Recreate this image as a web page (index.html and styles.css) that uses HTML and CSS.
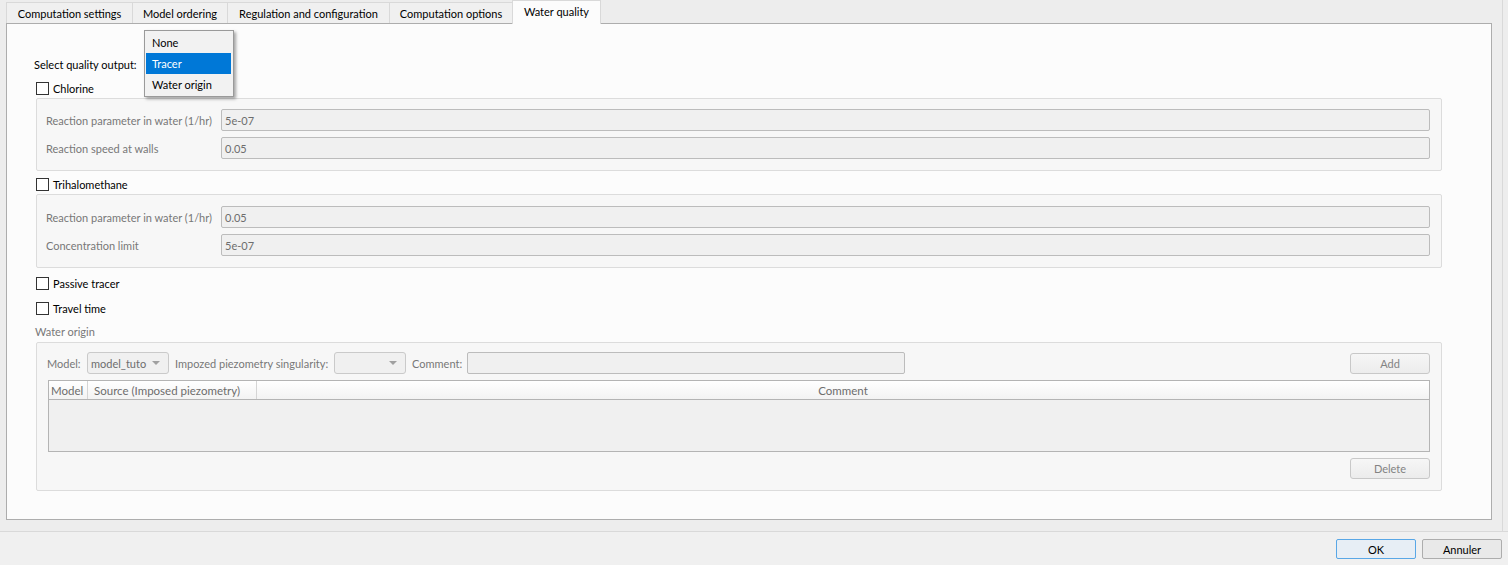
FILE: index.html
```html
<!DOCTYPE html>
<html>
<head>
<meta charset="utf-8">
<link rel="stylesheet" href="styles.css">
</head>
<body>
<div class="window">
  <div class="top">
    <div class="main">
      <div class="tabbar">
        <div class="tab t1">Computation settings</div>
        <div class="tab t2">Model ordering</div>
        <div class="tab t3">Regulation and configuration</div>
        <div class="tab t4">Computation options</div>
        <div class="tab t5 active">Water quality</div>
      </div>
      <div class="pane">
        <div class="row select-row">
          <span class="lbl">Select quality output:</span>
          <div class="combo qcombo"></div>
        </div>
        <div class="check c-chlorine"><span class="box"></span><span>Chlorine</span></div>
        <div class="group g1">
          <div class="frow"><span class="flabel">Reaction parameter in water (1/hr)</span><div class="input">5e-07</div></div>
          <div class="frow"><span class="flabel">Reaction speed at walls</span><div class="input">0.05</div></div>
        </div>
        <div class="check c-tri"><span class="box"></span><span>Trihalomethane</span></div>
        <div class="group g2">
          <div class="frow"><span class="flabel">Reaction parameter in water (1/hr)</span><div class="input">0.05</div></div>
          <div class="frow"><span class="flabel">Concentration limit</span><div class="input">5e-07</div></div>
        </div>
        <div class="check c-passive"><span class="box"></span><span>Passive tracer</span></div>
        <div class="check c-travel"><span class="box"></span><span>Travel time</span></div>
        <div class="section-label">Water origin</div>
        <div class="group g3">
          <div class="orow">
            <span class="dlabel l-model">Model:</span>
            <div class="combo mcombo"><span class="ctext">model_tuto</span><span class="arrow"></span></div>
            <span class="dlabel l-sing">Impozed piezometry singularity:</span>
            <div class="combo scombo"><span class="ctext"></span><span class="arrow"></span></div>
            <span class="dlabel l-comm">Comment:</span>
            <div class="input cinput"></div>
            <div class="spacer"></div>
            <div class="btn dis">Add</div>
          </div>
          <div class="table">
            <div class="thead">
              <div class="th th-model">Model</div>
              <div class="th th-source">Source (Imposed piezometry)</div>
              <div class="th th-comment">Comment</div>
            </div>
            <div class="tbody"></div>
          </div>
          <div class="brow"><div class="btn dis">Delete</div></div>
        </div>
        <div class="popup">
          <div class="item">None</div>
          <div class="item sel">Tracer</div>
          <div class="item">Water origin</div>
        </div>
      </div>
    </div>
    <div class="vline"></div>
  </div>
  <div class="bottom">
    <div class="btn ok">OK</div>
    <div class="btn">Annuler</div>
  </div>
</div>
</body>
</html>
```
FILE: styles.css
```css
* { box-sizing: border-box; }
html, body { margin: 0; padding: 0; }
body {
  width: 1508px;
  height: 565px;
  overflow: hidden;
  background: #ededed;
  font-family: Lato, "Noto Sans", sans-serif;
  font-size: 11px;
  color: #000;
  white-space: nowrap;
}
.window { display: flex; flex-direction: column; height: 565px; }
.top { display: flex; height: 531px; }
.main { width: 1502px; }
.vline { width: 1px; background: #d9d9d9; }

.tabbar {
  display: flex;
  align-items: flex-end;
  height: 23px;
  padding-left: 6px;
  position: relative;
  z-index: 2;
}
.tab {
  height: 21px;
  border: 1px solid #d9d9d9;
  border-bottom: none;
  background: #f0f0f0;
  display: flex;
  align-items: center;
  justify-content: center;
  margin-left: -1px;
  padding-top: 1px;
}
.tab:first-child { margin-left: 0; }
.t1 { width: 127px; }
.t2 { width: 96px; }
.t3 { width: 163px; }
.t4 { width: 124px; }
.t5 { width: 89px; }
.tab.active {
  height: 24px;
  margin-bottom: -1px;
  background: #fcfcfc;
  padding-top: 0;
  padding-bottom: 2px;
}

.pane {
  position: relative;
  margin-left: 6px;
  width: 1486px;
  height: 497px;
  border: 1px solid #adadad;
  background: #fcfcfc;
  padding: 29px 49px 0 29px;
  display: flex;
  flex-direction: column;
}
.row { display: flex; align-items: center; }
.select-row { height: 22px; margin-left: -2px; }
.lbl { width: 110px; }
.qcombo { width: 89px; height: 21px; }

.check { display: flex; align-items: center; height: 20px; gap: 4px; }
.box { width: 13px; height: 13px; border: 1px solid #333; background: #fff; }
.c-chlorine { margin-top: 3px; }
.c-tri { margin-top: 3px; }
.c-passive { margin-top: 5px; }
.c-travel { margin-top: 5px; }
.section-label { margin-top: 4px; height: 20px; line-height: 19px; color: #787878; margin-left: -1px; }

.group {
  border: 1px solid #dcdcdc;
  border-radius: 2px;
  background: #f7f7f7;
  display: flex;
  flex-direction: column;
}
.g1 { padding: 10px 11px 11px 9px; gap: 6px; }
.g2 { padding: 11px 11px 11px 9px; gap: 6px; }
.g3 { padding: 9px 11px 11px 10px; gap: 6px; }

.frow { display: flex; align-items: center; height: 22px; }
.flabel { width: 175px; color: #787878; flex: none; }
.input {
  flex: 1;
  height: 22px;
  border: 1px solid #bcbcbc;
  border-radius: 2px;
  background: #f0f0f0;
  color: #6d6d6d;
  padding-left: 3px;
  display: flex;
  align-items: center;
}

.orow { display: flex; align-items: center; height: 22px; }
.dlabel { color: #787878; flex: none; }
.l-model { width: 40px; }
.l-sing { width: 159px; }
.l-comm { width: 55px; }
.combo {
  height: 22px;
  border: 1px solid #cacaca;
  border-radius: 3px;
  background: #f0f0f0;
  display: flex;
  align-items: center;
  justify-content: space-between;
  padding: 0 8px 0 3px;
  color: #6d6d6d;
  flex: none;
}
.mcombo { width: 82px; margin-right: 6px; }
.scombo { width: 72px; margin-right: 6px; }
.arrow {
  width: 0; height: 0;
  border-left: 4px solid transparent;
  border-right: 4px solid transparent;
  border-top: 4px solid #a0a0a0;
}
.cinput { flex: none; width: 438px; }
.spacer { flex: 1; }

.btn {
  width: 80px;
  height: 21px;
  border: 1px solid #c8c8c8;
  border-radius: 3px;
  background: linear-gradient(#f6f6f6, #ececec);
  display: flex;
  align-items: center;
  justify-content: center;
  flex: none;
}
.btn.dis { color: #838383; }
.brow { display: flex; justify-content: flex-end; }

.table {
  height: 72px;
  border: 1px solid #b4b4b4;
  background: #f0f0f0;
  margin-left: 1px;
  display: flex;
  flex-direction: column;
}
.thead {
  display: flex;
  height: 19px;
  border-bottom: 1px solid #b4b4b4;
  background: linear-gradient(#ffffff, #f3f3f3);
  color: #6d6d6d;
  font-size: 11.5px;
}
.th { display: flex; align-items: center; padding-left: 2px; border-right: 1px solid #d5d5d5; }
.th-model { width: 39px; }
.th-source { width: 169px; padding-left: 6px; }
.th-comment { flex: 1; justify-content: center; border-right: none; padding-left: 0; }
.tbody { flex: 1; }

.popup {
  position: absolute;
  left: 137px;
  top: 6px;
  width: 90px;
  border: 1px solid #9a9a9a;
  background: #f2f2f2;
  padding: 1px 2px 1px 1px;
  box-shadow: 2px 2px 3px rgba(0, 0, 0, 0.35);
  z-index: 5;
}
.item { height: 21px; display: flex; align-items: center; padding-left: 6px; }
.item.sel { background: #0078d7; color: #fff; }

.bottom {
  flex: 1;
  border-top: 1px solid #d9d9d9;
  background: #f0f0f0;
  display: flex;
  justify-content: flex-end;
  align-items: flex-start;
  padding: 7px 6px 0 0;
  gap: 6px;
}
.bottom .btn { height: 20px; border-color: #adadad; background: #e9e9e9; border-radius: 2px; }
.bottom .btn.ok { border-color: #59a7e6; background: #e7eef5; }
```
